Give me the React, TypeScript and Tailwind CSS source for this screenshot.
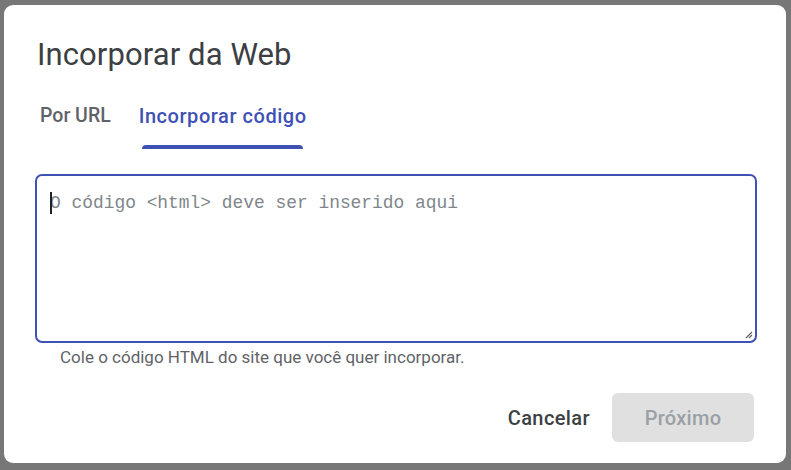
import React from 'react'

const App = () => {
    return (
        <div className="w-[791px] h-[470px] bg-[#777777] pl-[4px] pt-[5px] overflow-hidden" style={{ fontFamily: 'Roboto, "Noto Sans", sans-serif' }}>
            <div className="w-[782px] h-[458px] bg-white rounded-[9px] flex flex-col">
                {/* Title */}
                <h1 className="mt-[30px] ml-[33px] text-[31px] leading-[40px] text-[#3c4043] font-normal tracking-[0.1px]">
                    Incorporar da Web
                </h1>

                {/* Tabs */}
                <div className="mt-[29px] ml-[26px] flex items-end">
                    <div className="flex flex-col px-[10px]">
                        <span className="text-[19.5px] leading-[24px] font-medium text-[#5f6368]">Por URL</span>
                        <div className="mt-[17px] h-[4px]" />
                    </div>
                    <div className="ml-[8px] flex flex-col items-center px-[10px]">
                        <span className="text-[20px] leading-[24px] font-medium tracking-[0.55px] text-[#3f51b5]">Incorporar código</span>
                        <div className="mt-[17px] h-[4px] w-[161px] rounded-t-[4px] bg-[#3f51b5]" />
                    </div>
                </div>

                {/* Textarea */}
                <div className="mt-[25px] ml-[31px] w-[722px] h-[169px] border-2 border-[#3f51b5] rounded-[7px] relative">
                    <div className="pt-[15px] pl-[13px] flex items-center">
                        <span className="absolute left-[13px] top-[16px] w-[2px] h-[22px] bg-[#202124]" />
                        <span className="text-[17.9px] leading-[24px] text-[#80868b]" style={{ fontFamily: '"Liberation Mono", monospace' }}>
                            O código &lt;html&gt; deve ser inserido aqui
                        </span>
                    </div>
                    <svg className="absolute right-[2px] bottom-[2px]" width="8" height="8" viewBox="0 0 8 8">
                        <path d="M7 1L1 7M7 4L4 7" stroke="#5f6368" strokeWidth="1.2" />
                    </svg>
                </div>

                {/* Helper */}
                <p className="mt-[3px] ml-[56px] text-[17px] leading-[22px] text-[#5f6368]">
                    Cole o código HTML do site que você quer incorporar.
                </p>

                {/* Actions */}
                <div className="mt-[25px] mr-[32px] flex items-center justify-end">
                    <button className="text-[20px] leading-[24px] font-medium tracking-[0.4px] text-[#3c4043] px-[10px] mr-[12px]">Cancelar</button>
                    <button className="w-[142px] h-[49px] rounded-[6px] bg-[#e0e0e0] text-[20px] font-medium tracking-[0.3px] text-[#9aa0a6]">Próximo</button>
                </div>
            </div>
        </div>
    )
}

export default App
